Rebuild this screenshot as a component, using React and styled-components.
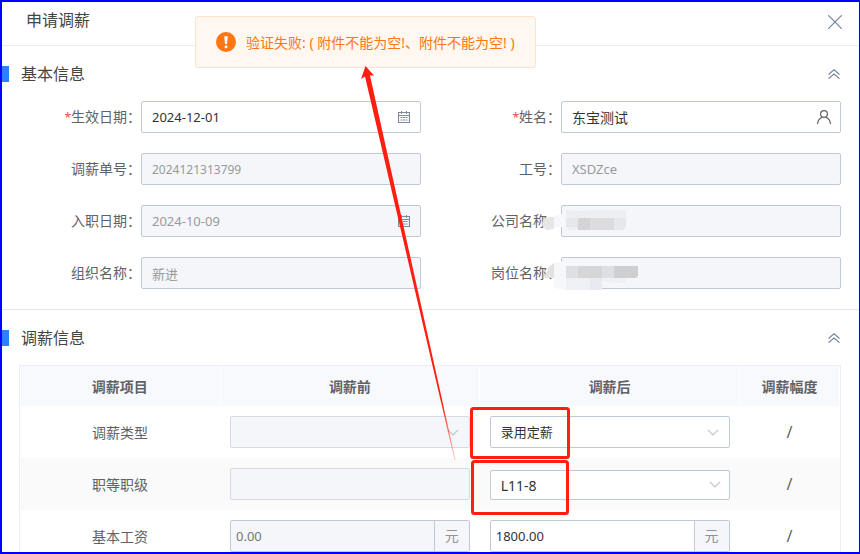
import React from 'react';
import styled, { createGlobalStyle } from 'styled-components';

const GlobalStyle = createGlobalStyle`
  * {
    box-sizing: border-box;
  }

  body {
    margin: 0;
    overflow: hidden;
    color: #606266;
    background-color: #fff;
    font-family: 'Noto Sans', 'Noto Sans CJK SC', sans-serif;
    font-size: 14px;
  }

  button,
  input,
  select {
    font-family: inherit;
  }
`;

const Page = styled.div`
  height: 100vh;
  overflow: hidden;

  &::after {
    content: '';
    position: fixed;
    inset: 0;
    border: 2px solid #0000ff;
    border-right-width: 1px;
    pointer-events: none;
  }
`;

const Header = styled.header`
  display: flex;
  justify-content: space-between;
  align-items: flex-start;
  height: 46px;
  padding: 0 18px 0 26px;
  border-bottom: 1px solid #ebebeb;
`;

const Title = styled.h1`
  margin: 0;
  color: #444;
  font-size: 16px;
  font-weight: 400;
  line-height: 40px;
`;

const IconButton = styled.button`
  display: flex;
  align-items: center;
  height: ${(props) => props.$height}px;
  padding: 0;
  border: none;
  background: none;
  color: #74829a;
  cursor: pointer;
`;

const Section = styled.section`
  display: flex;
  flex-direction: column;
  gap: 18px;
  padding: 19px 0 20px;
  border-bottom: 1px solid #e4e6ee;
`;

const SectionHead = styled.div`
  display: flex;
  align-items: center;
  height: 18px;
  padding-right: 20px;
`;

const Mark = styled.span`
  width: 9px;
  height: 16px;
  margin-right: 12px;
  background-color: #2a82ff;
`;

const SectionTitle = styled.h2`
  flex: 1;
  margin: 0;
  color: #444;
  font-size: 16px;
  font-weight: 400;
  line-height: 18px;
`;

const Form = styled.form`
  display: grid;
  grid-template-columns: 1fr 1fr;
  row-gap: 20px;
  padding: 0 19px 0 1px;
`;

const Field = styled.div`
  display: flex;
  align-items: center;
  height: 32px;
`;

const Label = styled.label`
  width: 140px;
  height: 32px;
  text-align: right;
  line-height: 32px;
`;

const Star = styled.span`
  color: #f5483b;
  font-size: 12px;
`;

const Control = styled.div`
  position: relative;
  display: flex;
  flex: 1;
  min-width: 0;
`;

const Input = styled.input`
  flex: 1;
  width: 100%;
  min-width: 0;
  height: 32px;
  padding: 0 10px;
  border: 1px solid #c0c8da;
  border-radius: 2px;
  outline: none;
  background-color: #fff;
  color: #333;
  font-size: ${(props) => props.$size || 14}px;

  &:disabled {
    background-color: #f5f6fa;
    color: #999;
  }
`;

const InputIcon = styled.span`
  position: absolute;
  top: 0;
  right: ${(props) => props.$right}px;
  display: flex;
  align-items: center;
  height: 100%;
  color: ${(props) => props.$color || '#7d8a9f'};
  pointer-events: none;
`;

const Mosaic = styled.svg`
  position: absolute;
  top: 0;
  left: -20px;
`;

const TableBox = styled.div`
  margin: 0 19px;
  border: 1px solid #ebeef5;
`;

const Table = styled.table`
  width: 100%;
  table-layout: fixed;
  border-collapse: collapse;
  text-align: center;
`;

const Th = styled.th`
  width: ${(props) => props.$width || 'auto'};
  height: 40px;
  padding: 0;
  border-right: 1px solid #fff;
  background-color: #f7f9fd;
  font-weight: 700;
`;

const Tr = styled.tr`
  height: 52px;
  background-color: ${(props) => (props.$striped ? '#fafafa' : '#fff')};
`;

const Td = styled.td`
  padding: 10px;
`;

const RateTd = styled(Td)`
  font-size: 16px;
`;

const SelectBox = styled.div`
  position: relative;
  display: flex;
  align-items: flex-end;
  height: 32px;
`;

const Select = styled.select`
  width: 100%;
  height: ${(props) => props.$height || 32}px;
  padding: 0 10px;
  appearance: none;
  border: 1px solid #c0c8da;
  border-radius: 2px;
  outline: none;
  background-color: #fff;
  color: #333;
  font-size: ${(props) => props.$size || 13}px;

  &:disabled {
    border-color: #d8dadf;
    background-color: #f5f6fa;
    opacity: 1;
  }
`;

const Amount = styled.div`
  display: flex;
  height: 32px;
  border: 1px solid #c0c8da;
  border-radius: 2px;
  background-color: ${(props) => (props.$disabled ? '#f5f6fa' : '#fff')};
`;

const AmountInput = styled.input`
  flex: 1;
  min-width: 0;
  padding: 0 5px;
  border: none;
  outline: none;
  background: none;
  color: #333;
  font-size: 13px;

  &:disabled {
    color: #777;
  }
`;

const Unit = styled.span`
  width: 35px;
  border-left: 1px solid #c0c8da;
  background-color: #f5f6fa;
  color: #909399;
  line-height: 30px;
`;

const Toast = styled.div`
  position: fixed;
  top: 16px;
  left: 195px;
  display: flex;
  align-items: center;
  gap: 10px;
  height: 52px;
  padding: 0 20px;
  border: 1px solid #ffe2cc;
  border-radius: 3px;
  background-color: #fff7f0;
  color: #ff7612;
  white-space: nowrap;
`;

const Annotation = styled.svg`
  position: absolute;
  top: 0;
  left: 0;
  pointer-events: none;
`;

const CloseIcon = () => (
  <svg width="14" height="14" viewBox="0 0 14 14" fill="none" stroke="currentColor" strokeWidth="1.2">
    <path d="M0.3 0.3L13.7 13.7M13.7 0.3L0.3 13.7" />
  </svg>
);

const CollapseIcon = () => (
  <svg width="12" height="10" viewBox="0 0 12 10" fill="none" stroke="currentColor" strokeWidth="1.1">
    <path d="M0.5 5.5L6 0.8L11.5 5.5M0.5 9.7L6 5L11.5 9.7" />
  </svg>
);

const CalendarIcon = () => (
  <svg width="12" height="12" viewBox="0 0 12 12" fill="none" stroke="currentColor">
    <path d="M0.5 1.5H11.5V11.5H0.5Z" strokeWidth="1.2" />
    <path d="M0.5 4.5H11.5" />
    <path d="M3.5 0V3M8.5 0V3" />
    <path d="M2.5 6.5H9.5M2.5 9H9.5" strokeDasharray="2 0.5" />
  </svg>
);

const PersonIcon = () => (
  <svg width="14" height="14" viewBox="0 0 14 14" fill="none" stroke="currentColor" strokeWidth="1.2">
    <circle cx="7" cy="4" r="3.4" />
    <path d="M0.6 14C0.6 10.5 2.6 8.4 5 7.2M13.4 14C13.4 10.5 11.4 8.4 9 7.2" />
  </svg>
);

const ArrowIcon = () => (
  <svg width="12" height="7" viewBox="0 0 12 7" fill="none" stroke="currentColor" strokeWidth="1.2">
    <path d="M0.8 0.8L6 6L11.2 0.8" />
  </svg>
);

const WarningIcon = () => (
  <svg width="20" height="20" viewBox="0 0 20 20">
    <circle cx="10" cy="10" r="10" fill="#ff7612" />
    <path d="M8.2 4.2H11.8L11 12H9Z" fill="#fff" />
    <circle cx="10" cy="14.8" r="1.5" fill="#fff" />
  </svg>
);

const CompanyMosaic = () => (
  <Mosaic width="110" height="36">
    <path d="M2 15L7 12H13V24L5 25L1 20Z" fill="#e7e7e8" />
    <path d="M13 11L20 9H25V22H13Z" fill="#f6f7fb" />
    <path d="M25 5L40 6L50 5H85V22L82 25H29L25 22Z" fill="#edeef1" />
    <rect x="25" y="13" width="12" height="9" fill="#e6e7ea" />
    <rect x="37" y="13" width="12" height="12" fill="#d4d4d6" />
    <rect x="49" y="13" width="24" height="12" fill="#dcdcdf" />
    <path d="M73 13H85V22L82 25H73Z" fill="#e6e7ea" />
  </Mosaic>
);

const PostMosaic = () => (
  <Mosaic width="110" height="36">
    <path d="M13 6L8 10L3 20L6 21H13Z" fill="#e2e2e3" />
    <path d="M13 6L30 3H100V9H85V25H61V33H25L13 31Z" fill="#f6f7fb" />
    <rect x="25" y="9" width="12" height="12" fill="#dedfe1" />
    <rect x="37" y="9" width="24" height="12" fill="#d6d6d8" />
    <rect x="61" y="9" width="12" height="12" fill="#dedfe3" />
    <path d="M73 9H97V19L95 21H73Z" fill="#cfcfd1" />
    <rect x="25" y="21" width="24" height="12" fill="#eff0f4" />
    <rect x="49" y="21" width="12" height="12" fill="#e9eaef" />
    <path d="M61 21H85V25L82 26H73L61 24Z" fill="#eff0f4" />
  </Mosaic>
);

const fields = [
  { id: 'effectDate', label: '生效日期', value: '2024-12-01', size: 13, required: true, icon: 'date' },
  { id: 'name', label: '姓名', value: '东宝测试', size: 14, required: true, icon: 'person' },
  { id: 'orderNo', label: '调薪单号', value: '2024121313799', size: 12 },
  { id: 'jobNo', label: '工号', value: 'XSDZce', size: 13 },
  { id: 'entryDate', label: '入职日期', value: '2024-10-09', size: 13, icon: 'date' },
  { id: 'company', label: '公司名称', value: '', mosaic: <CompanyMosaic /> },
  { id: 'org', label: '组织名称', value: '新进', size: 13 },
  { id: 'post', label: '岗位名称', value: '', mosaic: <PostMosaic /> },
];

const SectionHeader = ({ title }) => (
  <SectionHead>
    <Mark />
    <SectionTitle>{title}</SectionTitle>
    <IconButton type="button" $height={18} aria-label="收起">
      <CollapseIcon />
    </IconButton>
  </SectionHead>
);

const FormField = ({ field }) => (
  <Field>
    <Label htmlFor={field.id}>
      {field.required && <Star>*</Star>}
      {field.label}：
    </Label>
    <Control>
      <Input id={field.id} defaultValue={field.value} $size={field.size} disabled={!field.required} />
      {field.icon === 'date' && (
        <InputIcon $right={11}>
          <CalendarIcon />
        </InputIcon>
      )}
      {field.icon === 'person' && (
        <InputIcon $right={10} $color="#606266">
          <PersonIcon />
        </InputIcon>
      )}
      {field.mosaic}
    </Control>
  </Field>
);

const SelectField = ({ label, value, disabled, height, size, arrow = true, arrowRight = 11 }) => (
  <SelectBox>
    <Select aria-label={label} disabled={disabled} $height={height} $size={size}>
      <option>{value}</option>
    </Select>
    {arrow && (
      <InputIcon $right={arrowRight} $color="#c0c4cc">
        <ArrowIcon />
      </InputIcon>
    )}
  </SelectBox>
);

const AmountField = ({ label, value, disabled }) => (
  <Amount $disabled={disabled}>
    <AmountInput aria-label={label} defaultValue={value} disabled={disabled} />
    <Unit>元</Unit>
  </Amount>
);

const App = () => {
  return (
    <Page>
      <GlobalStyle />
      <Header>
        <Title>申请调薪</Title>
        <IconButton type="button" $height={44} aria-label="关闭">
          <CloseIcon />
        </IconButton>
      </Header>

      <Section>
        <SectionHeader title="基本信息" />
        <Form>
          {fields.map((field) => (
            <FormField key={field.id} field={field} />
          ))}
        </Form>
      </Section>

      <Section>
        <SectionHeader title="调薪信息" />
        <TableBox>
          <Table>
            <thead>
              <tr>
                <Th $width="200px">调薪项目</Th>
                <Th>调薪前</Th>
                <Th>调薪后</Th>
                <Th $width="100px">调薪幅度</Th>
              </tr>
            </thead>
            <tbody>
              <Tr>
                <Td>调薪类型</Td>
                <Td>
                  <SelectField label="调薪前调薪类型" value="" disabled />
                </Td>
                <Td>
                  <SelectField label="调薪后调薪类型" value="录用定薪" />
                </Td>
                <RateTd>/</RateTd>
              </Tr>
              <Tr $striped>
                <Td>职等职级</Td>
                <Td>
                  <SelectField label="调薪前职等职级" value="" disabled arrow={false} />
                </Td>
                <Td>
                  <SelectField label="调薪后职等职级" value="L11-8" height={30} size={14} arrowRight={9} />
                </Td>
                <RateTd>/</RateTd>
              </Tr>
              <Tr>
                <Td>基本工资</Td>
                <Td>
                  <AmountField label="调薪前基本工资" value="0.00" disabled />
                </Td>
                <Td>
                  <AmountField label="调薪后基本工资" value="1800.00" />
                </Td>
                <RateTd>/</RateTd>
              </Tr>
            </tbody>
          </Table>
        </TableBox>
      </Section>

      <Toast role="alert">
        <WarningIcon />
        <span>验证失败: ( 附件不能为空!、附件不能为空! )</span>
      </Toast>

      <Annotation width="600" height="540" aria-hidden="true">
        <defs>
          <linearGradient id="fade" gradientUnits="userSpaceOnUse" x1="0" y1="400" x2="0" y2="460">
            <stop offset="0" stopColor="#ff1e10" />
            <stop offset="1" stopColor="#ff1e10" stopOpacity="0.2" />
          </linearGradient>
        </defs>
        <path d="M365.5 66L361 79L365 76.5L454.5 460H455.5L370 75.5L374 75.5Z" fill="url(#fade)" />
        <g fill="none" stroke="#ff1e10" strokeWidth="3">
          <rect x="471.5" y="408.5" width="97" height="49" rx="2" />
          <rect x="472.5" y="461.5" width="95" height="52" rx="2" />
        </g>
      </Annotation>
    </Page>
  );
};

export default App;
